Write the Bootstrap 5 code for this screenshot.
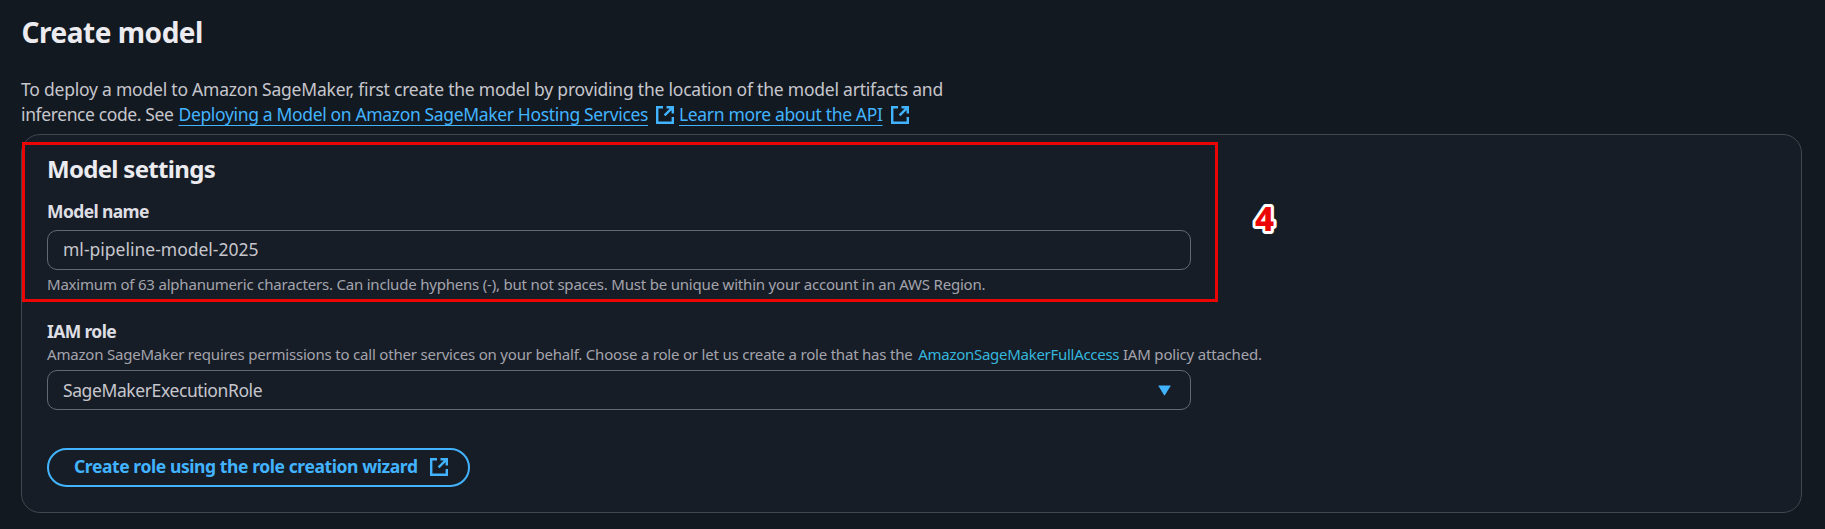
<!DOCTYPE html>
<html lang="en" data-bs-theme="dark">
<head>
<meta charset="utf-8">
<title>Create model</title>
<link href="https://cdn.jsdelivr.net/npm/bootstrap@5.3.0/dist/css/bootstrap.min.css" rel="stylesheet">
<style>
body{background:#131920;color:#c6c6cd;font-family:"Noto Sans","Open Sans",sans-serif;font-size:17.5px;line-height:25px;overflow:hidden}
.page{padding:14px 23px 0 21px}
.page-title{font-size:28px;line-height:36px;font-weight:700;color:#ebebf0;letter-spacing:-.47px;margin-bottom:27px;padding-left:.5px}
.intro{letter-spacing:-.221px;margin-bottom:7px;white-space:nowrap}
.intro-see{letter-spacing:-.385px;margin-right:5px}
.ext-link{color:#42b4ff;text-decoration:underline;text-decoration-thickness:1px;text-underline-offset:4px;text-decoration-skip-ink:none;letter-spacing:-.345px}
.ext-link:hover{color:#75cfff}
.ext-icon{width:18px;height:18px;fill:none;stroke:#42b4ff;stroke-width:2.4;flex:none;margin-left:8px}
.intro .ext-icon{margin-top:1px;margin-right:5px}
.wizard-btn .ext-icon{margin-left:12px}
.panel{background:#171d26;border:1px solid #424650;border-radius:19px;padding:19px 25px 25px;height:379px}
.panel-title{font-size:24px;line-height:30px;font-weight:700;color:#ebebf0;letter-spacing:-.695px;margin-bottom:16px}
.field-label{font-weight:700;line-height:22px;color:#dedee3;letter-spacing:-.62px;margin:0;display:block}
.role-label{margin-top:26px;margin-bottom:2px}
.field-note{font-size:15px;line-height:20px;color:#a4a4ad;letter-spacing:-.2px;white-space:nowrap}
.field-note a{color:#35b6dc;letter-spacing:-.282px;margin-left:2px}
.field-box{width:1144px;height:40px;border:1px solid #656871;border-radius:10px;background:transparent;color:#c6c6cd;padding:0 31px 2px 15px;font-size:17.5px;line-height:36px}
.role-select{margin-top:6px;padding:0 19px 1px 15px;letter-spacing:-.4px}
.role-select svg{margin-top:2px}
.wizard-btn{height:39px;width:423px;border:2px solid #42b4ff;border-radius:20px;color:#42b4ff;font-size:17.5px;font-weight:700;letter-spacing:-.41px;padding:0 0 1px 25px;line-height:1;margin-top:38px}
.highlight{left:0;top:7px;width:1196px;height:160px;border:3px solid #eb0505;pointer-events:none}
.step-mark{left:1223px;top:61px;width:40px;height:46px}
.step-mark text{font-size:33px;font-weight:800;fill:#eb0505;stroke:#fff;stroke-width:6px;stroke-linejoin:round;paint-order:stroke}
</style>
</head>
<body>
<svg class="d-none"><symbol id="ext" viewBox="0 0 18 18"><path d="M7 1.2H1.2v15.6h15.6V11M10.5 1.2h6.3v6.3M16.4 1.6L8.6 9.4"/></symbol></svg>
<main class="page">
  <h1 class="page-title">Create model</h1>
  <div class="intro">
    <div>To deploy a model to Amazon SageMaker, first create the model by providing the location of the model artifacts and</div>
    <div class="d-flex align-items-center">
      <span class="intro-see">inference code. See</span>
      <a href="#" class="ext-link">Deploying a Model on Amazon SageMaker Hosting Services</a>
      <svg class="ext-icon"><use href="#ext"/></svg>
      <a href="#" class="ext-link">Learn more about the API</a>
      <svg class="ext-icon"><use href="#ext"/></svg>
    </div>
  </div>
  <section class="panel position-relative">
    <h2 class="panel-title">Model settings</h2>
    <label class="field-label" for="modelName">Model name</label>
    <input id="modelName" class="form-control field-box mt-2" value="ml-pipeline-model-2025">
    <div class="field-note mt-1">Maximum of 63 alphanumeric characters. Can include hyphens (-), but not spaces. Must be unique within your account in an AWS Region.</div>
    <div class="field-label role-label">IAM role</div>
    <div class="field-note">Amazon SageMaker requires permissions to call other services on your behalf. Choose a role or let us create a role that has the <a href="#" class="text-decoration-none">AmazonSageMakerFullAccess</a> IAM policy attached.</div>
    <div class="field-box role-select d-flex align-items-center justify-content-between">
      <span>SageMakerExecutionRole</span>
      <svg width="13" height="11" fill="#42b4ff"><path d="M1 .5h11q.8 0 .4.8L7 10q-.5.8-1 0L.6 1.3Q.2.5 1 .5z"/></svg>
    </div>
    <button type="button" class="btn wizard-btn d-flex align-items-center">
      <span>Create role using the role creation wizard</span>
      <svg class="ext-icon"><use href="#ext"/></svg>
    </button>
    <div class="highlight position-absolute"></div>
    <svg class="step-mark position-absolute"><text x="19.5" y="35" text-anchor="middle">4</text></svg>
  </section>
</main>
<script src="https://cdn.jsdelivr.net/npm/bootstrap@5.3.0/dist/js/bootstrap.bundle.min.js"></script>
</body>
</html>
